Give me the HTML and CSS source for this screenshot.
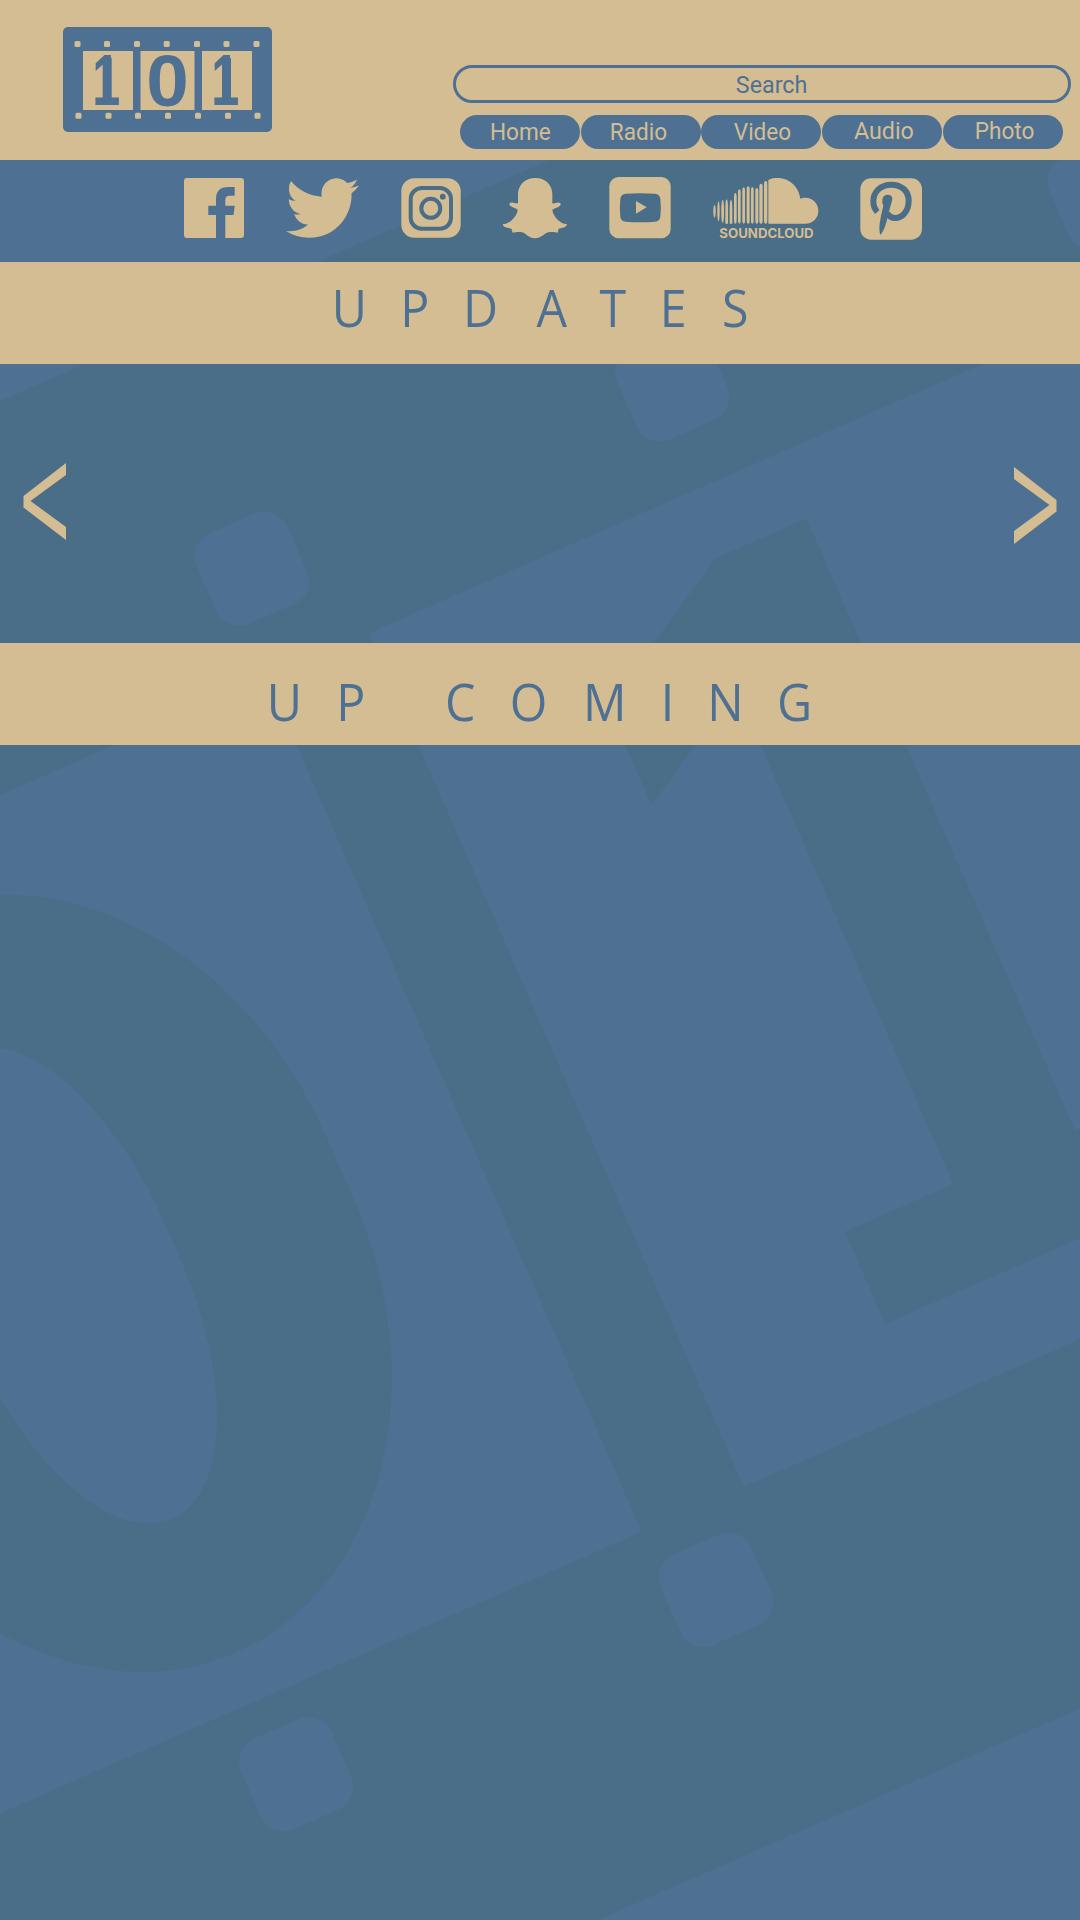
FILE: index.html
```html
<!DOCTYPE html>
<html lang="en">
<head>
<meta charset="utf-8">
<title>101</title>
<link rel="stylesheet" href="styles.css">
</head>
<body>
<div class="page">
  <svg class="backdrop" viewBox="0 0 1080 1920" aria-hidden="true">
    <g transform="rotate(-23.7)">
      <rect class="film" x="-1400" y="367.4" width="2900" height="1631"/>
      <rect class="frame" x="-851" y="728" width="823" height="932.5"/>
      <rect class="frame" x="83.500" y="728" width="1000" height="932.5"/>
      <rect class="frame" x="-47.500" y="572.500" width="99" height="99" rx="25"/>
      <rect class="frame" x="411.500" y="572.500" width="99" height="99" rx="25"/>
      <rect class="frame" x="884" y="572" width="99" height="99" rx="25"/>
      <rect class="frame" x="-491.500" y="1694" width="99" height="99" rx="25"/>
      <rect class="frame" x="-33" y="1694" width="99" height="99" rx="25"/>
      <!-- oval ring -->
      <rect class="film" x="-738" y="802" width="580" height="806" rx="290" ry="370"/>
      <rect class="frame" x="-565" y="950" width="224" height="510" rx="112" ry="235"/>
      <!-- column, base and slanted arm -->
      <rect class="film" x="431" y="799" width="99" height="700"/>
      <rect class="film" x="397" y="818" width="120" height="700"/>
      <rect class="film" x="278.500" y="1467.500" width="371" height="100.500"/>
      <rect class="film" width="158" height="109" transform="translate(273 890) skewY(-30)"/>
    </g>
  </svg>

  <header class="header">
    <svg class="logo" viewBox="63 27 209 105" role="img" aria-label="101">
      <rect class="blue" x="63" y="27" width="209" height="105" rx="5"/>
      <path class="tan" d="M83 51H133V110H83ZM140.500 51H194.500V110H140.500ZM202 51H252V110H202Z"/>
      <g class="tan">
        <rect x="74.500" y="41" width="6" height="6" rx="1.500"/><rect x="104" y="41" width="6" height="6" rx="1.500"/><rect x="134" y="41" width="6" height="6" rx="1.500"/><rect x="163.700" y="41" width="6" height="6" rx="1.500"/><rect x="194" y="41" width="6" height="6" rx="1.500"/><rect x="223.500" y="41" width="6" height="6" rx="1.500"/><rect x="253.500" y="41" width="6" height="6" rx="1.500"/>
        <rect x="75.500" y="112.700" width="6" height="6" rx="1.500"/><rect x="105.500" y="112.700" width="6" height="6" rx="1.500"/><rect x="135" y="112.700" width="6" height="6" rx="1.500"/><rect x="165" y="112.700" width="6" height="6" rx="1.500"/><rect x="195" y="112.700" width="6" height="6" rx="1.500"/><rect x="225" y="112.700" width="6" height="6" rx="1.500"/><rect x="254.500" y="112.700" width="6" height="6" rx="1.500"/>
      </g>
      <g class="blue digit">
        <text transform="translate(92.200 104.800) scale(.505 .718)">1</text>
        <text transform="translate(146.300 105.800) scale(.765 .715)">0</text>
        <text transform="translate(211.200 104.800) scale(.505 .718)">1</text>
      </g>
      <g class="blue">
        <rect x="102.700" y="58" width="9" height="45"/>
        <rect x="222" y="58" width="9" height="45"/>
      </g>
    </svg>
    <div class="controls">
      <div class="search"><span>Search</span></div>
      <nav class="menu">
        <a class="pill"><span>Home</span></a>
        <a class="pill pill-radio"><span>Radio</span></a>
        <a class="pill pill-video"><span>Video</span></a>
        <a class="pill pill-high pill-audio"><span>Audio</span></a>
        <a class="pill pill-high pill-photo"><span>Photo</span></a>
      </nav>
    </div>
  </header>

  <nav class="social">
    <svg width="60" height="60" viewBox="0 0 60 60" role="img" aria-label="Facebook"><path d="M3 0H57Q60 0 60 3V57Q60 60 57 60H41.300V37H49.600L50.700 27.700H41.300V22Q41.300 17.700 45.500 17.700H50.700V9H44Q32 9 32 21V27.700H24.300V37H32V60H3Q0 60 0 57V3Q0 0 3 0Z"/></svg>
    <svg width="73" height="60" viewBox="0 2.200 24 19.600" role="img" aria-label="Twitter"><path d="M23.953 4.570a10 10 0 01-2.825.775 4.958 4.958 0 002.163-2.723c-.951.555-2.005.959-3.127 1.184a4.920 4.920 0 00-8.384 4.482C7.690 8.095 4.067 6.130 1.640 3.162a4.822 4.822 0 00-.666 2.475c0 1.710.870 3.213 2.188 4.096a4.904 4.904 0 01-2.228-.616v.060a4.923 4.923 0 003.946 4.827 4.996 4.996 0 01-2.212.085 4.936 4.936 0 004.604 3.417 9.867 9.867 0 01-6.102 2.105c-.390 0-.779-.023-1.170-.067a13.995 13.995 0 007.557 2.209c9.053 0 13.998-7.496 13.998-13.985 0-.210 0-.420-.015-.630A9.935 9.935 0 0024 4.590z"/></svg>
    <svg width="60" height="60" viewBox="0 0 60 60" role="img" aria-label="Instagram"><rect x=".300" y=".300" width="59.400" height="59.400" rx="13"/><g class="cutline"><rect x="9.700" y="10" width="40.300" height="40.700" rx="11"/><circle cx="29.800" cy="30.300" r="9.500"/></g><circle class="cutfill" cx="41.800" cy="18.700" r="2.900"/></svg>
    <svg class="snap" width="66" height="62" viewBox="66 50 198 186" role="img" aria-label="Snapchat"><path d="M166 53C134 53 114 75 114 102V129C108 131 100 125 92 127C86 129 88 136 93 138C100 142 108 144 113 148C112 165 92 190 68 192C68 200 82 203 94 205L98 217C106 216 116 213 126 216C138 219 146 234 165 234C184 234 193 219 205 216C216 213 226 216 233 217L236 205C250 203 260 200 261 192C238 190 218 165 217 148C224 144 232 142 238 138C244 135 243 128 238 127C230 126 222 131 217 129V102C217 75 198 53 166 53Z"/></svg>
    <svg class="tube" width="62" height="62" viewBox="387 51 186 186" role="img" aria-label="YouTube"><rect x="388" y="51" width="184" height="184" rx="28"/><path class="cutfill" d="M437 101Q481 98 525 101Q539 102 541 116Q544 143 541 170Q539 184 525 185Q481 188 437 185Q423 184 421 170Q418 143 421 116Q423 102 437 101Z"/><path d="M468 123V161L500 142Z"/></svg>
    <svg class="cloud" width="106" height="66" viewBox="68 52 318 198" role="img" aria-label="SoundCloud">
      <path d="M234 61C243 56 252 55 262 55C298 55 326 82 330 117C336 114 341 114 345 114C367 114 384 131 384 153C384 175 367 192 346 192H234Z"/>
      <g><rect x="69" y="136" width="7" height="38" rx="3.500" ry="19"/><rect x="81" y="125" width="7" height="60" rx="3.500" ry="28"/><rect x="93" y="120" width="8" height="70" rx="4" ry="28"/><path d="M105 192V150Q105 119 109 119T113 150V192ZM118 192V150Q118 121 122 121T126 150V192Z"/><rect x="131" y="100" width="8" height="92" rx="4" ry="12"/><rect x="143" y="89" width="8" height="103" rx="4" ry="10"/><rect x="156" y="83" width="8" height="109" rx="4" ry="8"/><rect x="169" y="80" width="9" height="112" rx="4" ry="8"/><rect x="182" y="82" width="8" height="110" rx="4" ry="8"/><rect x="195" y="85" width="9" height="107" rx="4" ry="8"/><rect x="207" y="72" width="10" height="120" rx="4" ry="8"/><rect x="221" y="64" width="10" height="128" rx="4" ry="8"/></g>
      <text class="cloudname" x="87" y="234" textLength="283" lengthAdjust="spacingAndGlyphs">SOUNDCLOUD</text>
    </svg>
    <svg class="pinterest" width="62" height="62" viewBox="510 54 186 186" role="img" aria-label="Pinterest"><rect x="511" y="55" width="185" height="184" rx="32"/><path class="cutline pin" d="M562 156C552 146 550 135 550 124C550 95 572 74 604 74C634 74 656 93 656 122C656 152 638 174 615 174C604 174 597 168 592 160"/><path class="cutfill" d="M577 122C577 110 584 104 594 104C605 104 609 113 606 122L596 158C590 185 584 210 571 225C565 205 570 185 573 168L580 137C577 131 577 127 577 122Z"/></svg>
  </nav>

  <section class="band">
    <svg viewBox="0 262 1080 102"><text class="title" transform="scale(.93 1)" y="327" x="356.600 430.400 497.800 576.900 644.600 709.500 776.300">UPDATES</text></svg>
  </section>

  <section class="carousel">
    <svg class="prev" width="43" height="77" viewBox="0 0 43 77" role="img" aria-label="Previous"><path d="M43 0V12L7.500 38L43 64V77L.500 44.500V33Z"/></svg>
    <svg class="next" width="43" height="77" viewBox="0 0 43 77" role="img" aria-label="Next"><path d="M0 0V12L35.500 38L0 64V77L42.500 44.500V33Z"/></svg>
  </section>

  <section class="band">
    <svg viewBox="0 643 1080 102"><text class="title" transform="scale(.93 1)" y="721" x="286.800 361.600 408 478.500 548 626.900 710.500 760.500 835.500">UP COMING</text></svg>
  </section>
</div>
</body>
</html>
```
FILE: styles.css
```css
:root {
  --tan: #d4bd92;
  --blue: #4e7193;
  --film: #4a6d88;
}

body {
  margin: 0;
  background: var(--blue);
}

.page {
  position: relative;
  display: flex;
  flex-direction: column;
  width: 1080px;
  height: 1920px;
  overflow: hidden;
  isolation: isolate;
}

.backdrop {
  position: absolute;
  inset: 0;
  z-index: -1;
}

.film { fill: var(--film); }
.frame, .blue { fill: var(--blue); }
.tan { fill: var(--tan); }

.digit {
  font: bold 100px "Liberation Sans", Arial, sans-serif;
}

.header {
  display: flex;
  justify-content: space-between;
  align-items: flex-start;
  box-sizing: border-box;
  height: 160px;
  padding: 27px 9px 0 63px;
  background: var(--tan);
}

.logo {
  display: block;
  width: 209px;
  height: 105px;
}

.controls {
  display: flex;
  flex-direction: column;
  gap: 12px;
  width: 618.5px;
  padding-top: 38px;
  font: 24px/34px Roboto, sans-serif;
}

.search {
  box-sizing: border-box;
  height: 38px;
  border: 3px solid var(--blue);
  border-radius: 19px;
  color: var(--blue);
  line-height: 34px;
  text-align: center;
}

.search span, .pill span {
  display: inline-block;
  transform: scaleX(.94);
}

.search span {
  padding-left: 20px;
  transform: scaleX(.97);
}

.menu {
  display: flex;
  gap: .7px;
  padding-left: 7.5px;
}

.pill {
  width: 120px;
  height: 34px;
  border-radius: 17px;
  background: var(--blue);
  color: var(--tan);
  text-align: center;
}

.pill-radio span { margin-left: -4px; }
.pill-video span { padding-left: 2px; }
.pill-high { line-height: 32px; }
.pill-audio span { padding-left: 3px; transform: scaleX(.97); }
.pill-photo span { padding-left: 4px; }

.social {
  display: flex;
  align-items: flex-start;
  gap: 42px;
  box-sizing: border-box;
  height: 102px;
  padding: 18px 0 0 184px;
}

.social svg {
  flex: none;
  fill: var(--tan);
}

.social .snap { margin: -1px 0 0 -1px; }
.social .tube { margin: -1px 0 0 -1px; }
.social .cloud { margin-top: -1px; }
.social .pinterest { margin-left: -1px; }
.social .cutfill { fill: var(--film); }

.cutline {
  fill: none;
  stroke: var(--film);
  stroke-width: 4px;
}

.pin { stroke-width: 18px; }

.cloudname {
  font: bold 39px Inter, sans-serif;
}

.band {
  height: 102px;
  background: var(--tan);
}

.band svg {
  display: block;
  width: 100%;
  height: 100%;
}

.title {
  font: 52px "Open Sans", sans-serif;
  fill: var(--blue);
}

.carousel {
  display: flex;
  justify-content: space-between;
  align-items: flex-start;
  box-sizing: border-box;
  height: 279px;
  padding: 98.500px 23px 0;
  fill: var(--tan);
}

.next { margin-top: 4px; }
```
